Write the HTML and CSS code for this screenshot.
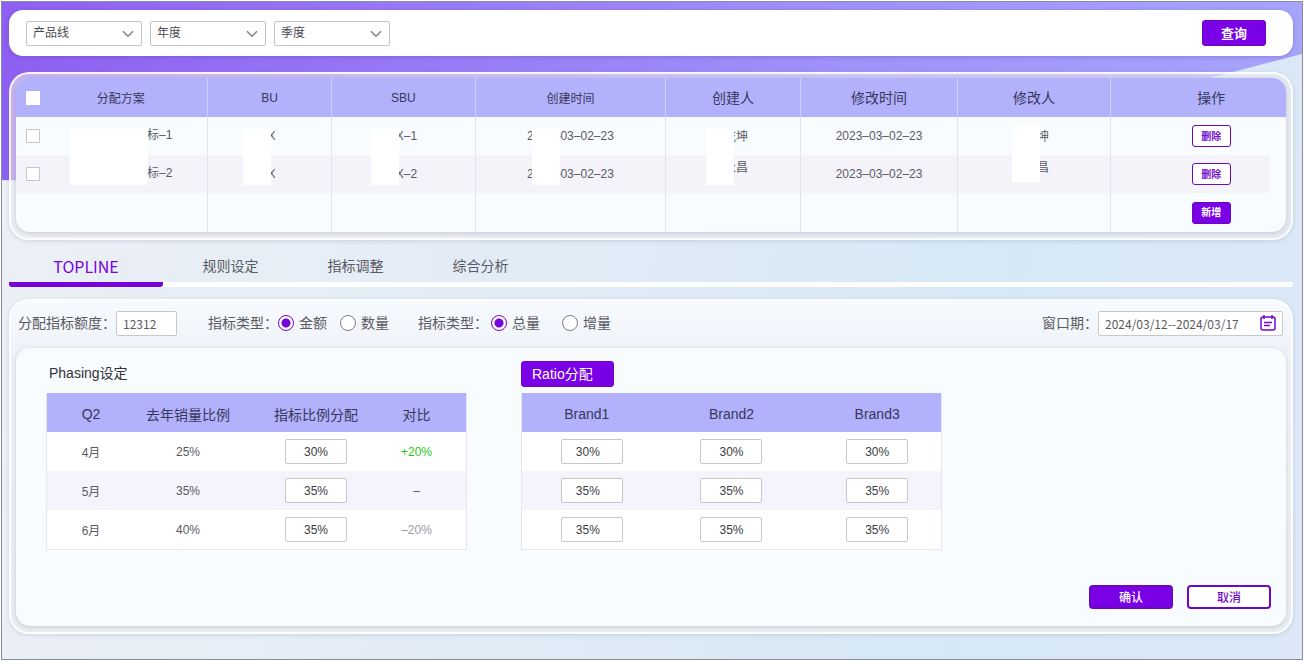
FILE: index.html
```html
<!DOCTYPE html>
<html lang="zh-CN">
<head>
  <meta charset="UTF-8" />
  <meta name="viewport" content="width=device-width, initial-scale=1.0"/>
  <title>指标分配</title>
  <link rel="stylesheet" href="styles.css">
</head>
<body>

<div class="page">

  <form class="search-bar">
    <span class="select-box">
      <select aria-label="产品线"><option>产品线</option></select>
      <svg viewBox="0 0 12 8"><path d="M1 1.2l5 5 5-5"/></svg>
    </span>
    <span class="select-box">
      <select aria-label="年度"><option>年度</option></select>
      <svg viewBox="0 0 12 8"><path d="M1 1.2l5 5 5-5"/></svg>
    </span>
    <span class="select-box">
      <select aria-label="季度"><option>季度</option></select>
      <svg viewBox="0 0 12 8"><path d="M1 1.2l5 5 5-5"/></svg>
    </span>
    <button type="button" class="btn btn-search">查询</button>
  </form>

  <div class="panel">
    <div class="panel-inner">
      <table class="plan-table">
        <colgroup>
          <col class="c-check"><col class="c-name"><col class="c-bu"><col class="c-sbu"><col class="c-time">
          <col class="c-creator"><col class="c-mtime"><col class="c-modifier"><col class="c-action">
        </colgroup>
        <thead>
          <tr>
            <th class="check"><input type="checkbox" aria-label="全选"></th>
            <th class="name">分配方案</th>
            <th>BU</th>
            <th>SBU</th>
            <th>创建时间</th>
            <th class="big">创建人</th>
            <th class="big">修改时间</th>
            <th class="big">修改人</th>
            <th class="big action">操作</th>
          </tr>
        </thead>
        <tbody>
          <tr>
            <td class="check"><input type="checkbox" aria-label="选择第1行"></td>
            <td class="name">标–1<i class="mask mask-name"></i></td>
            <td class="bu">X<i class="mask mask-bu"></i></td>
            <td class="sbu">X–1<i class="mask mask-sbu"></i></td>
            <td>2023–03–02–23<i class="mask mask-time"></i></td>
            <td class="creator">乾坤<i class="mask mask-creator"></i></td>
            <td>2023–03–02–23</td>
            <td class="modifier">坤<i class="mask mask-modifier"></i></td>
            <td class="action"><button type="button" class="btn btn-small btn-line">删除</button></td>
          </tr>
          <tr class="stripe">
            <td class="check"><input type="checkbox" aria-label="选择第2行"></td>
            <td class="name">标–2</td>
            <td class="bu">X</td>
            <td class="sbu">X–2</td>
            <td>2023–03–02–23</td>
            <td class="creator raised">永昌</td>
            <td>2023–03–02–23</td>
            <td class="modifier raised">昌</td>
            <td class="action"><button type="button" class="btn btn-small btn-line">删除</button></td>
          </tr>
          <tr>
            <td class="check"></td>
            <td class="name"></td>
            <td></td>
            <td></td>
            <td></td>
            <td></td>
            <td></td>
            <td></td>
            <td class="action"><button type="button" class="btn btn-small">新增</button></td>
          </tr>
        </tbody>
      </table>
    </div>
  </div>

  <nav class="tabs">
    <a href="#" class="tab active">TOPLINE</a>
    <a href="#" class="tab">规则设定</a>
    <a href="#" class="tab">指标调整</a>
    <a href="#" class="tab">综合分析</a>
  </nav>

  <form class="panel panel-light">
    <div class="filters">
      <label for="quota">分配指标额度：</label>
      <input type="text" id="quota" class="box quota" value="12312">

      <div class="radio-group amount">
        <span>指标类型：</span>
        <label><input type="radio" name="unit" checked>金额</label>
        <label><input type="radio" name="unit">数量</label>
      </div>

      <div class="radio-group total">
        <span>指标类型：</span>
        <label><input type="radio" name="scope" checked>总量</label>
        <label><input type="radio" name="scope">增量</label>
      </div>

      <label for="period" class="period-label">窗口期：</label>
      <span class="period">
        <input type="text" id="period" class="box" value="2024/03/12--2024/03/17">
        <svg viewBox="0 0 16 16">
          <rect x="1" y="2" width="14" height="13" rx="2"/>
          <path d="M4 0v4M12 0v4M4 7.500h8M4 10.500h6"/>
        </svg>
      </span>
    </div>

    <div class="panel-inner detail">
      <div class="blocks">
        <section>
          <h2 class="block-title">Phasing设定</h2>
          <table class="data-table phasing">
            <colgroup><col class="p1"><col class="p2"><col class="p3"><col class="p4"></colgroup>
            <thead>
              <tr><th>Q2</th><th>去年销量比例</th><th>指标比例分配</th><th>对比</th></tr>
            </thead>
            <tbody>
              <tr>
                <td>4月</td><td>25%</td>
                <td><input type="text" class="box" value="30%" aria-label="4月指标比例"></td>
                <td class="up">+20%</td>
              </tr>
              <tr class="stripe">
                <td>5月</td><td>35%</td>
                <td><input type="text" class="box" value="35%" aria-label="5月指标比例"></td>
                <td>–</td>
              </tr>
              <tr>
                <td>6月</td><td>40%</td>
                <td><input type="text" class="box" value="35%" aria-label="6月指标比例"></td>
                <td class="down">–20%</td>
              </tr>
            </tbody>
          </table>
        </section>

        <section>
          <button type="button" class="btn btn-ratio">Ratio分配</button>
          <table class="data-table ratio">
            <thead>
              <tr><th>Brand1</th><th>Brand2</th><th>Brand3</th></tr>
            </thead>
            <tbody>
              <tr>
                <td><input type="text" class="box" value="30%" aria-label="4月 Brand1"></td>
                <td><input type="text" class="box" value="30%" aria-label="4月 Brand2"></td>
                <td><input type="text" class="box" value="30%" aria-label="4月 Brand3"></td>
              </tr>
              <tr class="stripe">
                <td><input type="text" class="box" value="35%" aria-label="5月 Brand1"></td>
                <td><input type="text" class="box" value="35%" aria-label="5月 Brand2"></td>
                <td><input type="text" class="box" value="35%" aria-label="5月 Brand3"></td>
              </tr>
              <tr>
                <td><input type="text" class="box" value="35%" aria-label="6月 Brand1"></td>
                <td><input type="text" class="box" value="35%" aria-label="6月 Brand2"></td>
                <td><input type="text" class="box" value="35%" aria-label="6月 Brand3"></td>
              </tr>
            </tbody>
          </table>
        </section>
      </div>

      <div class="actions">
        <button type="button" class="btn btn-wide">确认</button>
        <button type="button" class="btn btn-wide btn-line">取消</button>
      </div>
    </div>
  </form>

</div>

</body>
</html>
```

FILE: styles.css
```css
* {
  box-sizing: border-box;
}
body {
  margin: 0;
  padding: 1px;
  background: #fff;
  color: #5a5a62;
  font-family: "Liberation Sans", "Noto Sans CJK SC", sans-serif;
  font-size: 12px;
}
button, input, select {
  font-family: inherit;
  margin: 0;
}
.page {
  position: relative;
  z-index: 0;
  min-height: calc(100vh - 2px);
  padding: 8px 9px 24px 7px;
  border: 1px solid #8c8c94;
  background: linear-gradient(100deg, #edf0f6 0%, #e0ebf6 45%, #d6e8f6 75%, #dce8f7 100%);
}
/* purple backdrop with the slanted edge */
.page::before {
  content: "";
  position: absolute;
  z-index: -1;
  top: 0;
  left: 0;
  right: 0;
  height: 179px;
  background: linear-gradient(90deg, #8e60f2 0%, #9778f6 30%, #9f92f9 65%, #a7a4fc 100%);
  clip-path: polygon(0 0, 100% 0, 100% 52px, 70% 154px, 3% 100%, 0 178px);
}

/* search bar */
.search-bar {
  display: flex;
  align-items: center;
  gap: 8px;
  height: 46px;
  padding: 0 27px 0 17px;
  background: #fff;
  border-radius: 14px;
  box-shadow: 0 1px 4px rgba(70, 50, 140, 0.3);
}
.select-box {
  position: relative;
  width: 116px;
}
.select-box select {
  display: block;
  width: 100%;
  height: 25px;
  padding: 0 6px;
  border: 1px solid #c4c4c4;
  border-radius: 2px;
  background: #fff;
  color: #4c4c54;
  font-size: 12px;
  appearance: none;
}
.select-box svg {
  position: absolute;
  top: 9px;
  right: 8px;
  width: 12px;
  height: 8px;
  fill: none;
  stroke: #808080;
  stroke-width: 1.4;
  pointer-events: none;
}

/* buttons */
.btn {
  padding: 0 0 2px;
  border: 1px solid #6a08c4;
  border-radius: 3px;
  background: #7a00e6;
  color: #fff;
  font-weight: 500;
  cursor: pointer;
}
.btn-line {
  background: #fff;
  color: #7410cc;
}
.btn-search {
  width: 64px;
  height: 26px;
  margin-left: auto;
  font-size: 13px;
  font-weight: bold;
}
.btn-small {
  display: block;
  width: 39px;
  height: 22px;
  margin: 0 auto;
  font-size: 10px;
  font-weight: bold;
}
.btn-wide {
  width: 84px;
  height: 24px;
  border-width: 2px;
  border-radius: 4px;
  font-size: 12px;
}
.btn-ratio {
  display: block;
  width: 93px;
  height: 26px;
  padding: 0 10px 3px;
  font-size: 14px;
  font-weight: normal;
  text-align: left;
}

/* frosted panels */
.panel {
  margin-top: 16px;
  padding: 4px 5px 6px;
  border: 2px solid rgba(255, 255, 255, 0.85);
  border-radius: 20px;
  background: rgba(236, 234, 240, 0.6);
  box-shadow: 0 1px 4px rgba(90, 100, 130, 0.2);
}
.panel-light {
  margin-top: 12px;
  padding-top: 0;
  background: linear-gradient(#f7fafe, #eff2f8 50px, #e9edf1);
}
.panel-inner {
  overflow: hidden;
  border-radius: 14px;
  background: #f8fcff;
  box-shadow: 0 1px 4px rgba(90, 100, 130, 0.25);
}

/* plan table */
.plan-table {
  width: 100%;
  table-layout: fixed;
  border-spacing: 0;
}
.c-check { width: 33px; }
.c-name { width: 12.5%; }
.c-bu { width: 9.8%; }
.c-sbu { width: 11.3%; }
.c-time { width: 15%; }
.c-creator { width: 10.6%; }
.c-mtime { width: 12.4%; }
.c-modifier { width: 12%; }
.plan-table th,
.plan-table td {
  height: 38px;
  padding: 0;
  border-right: 1px solid #e3e3ec;
  text-align: center;
}
.plan-table th {
  height: 39px;
  border-right-color: #d0d0fc;
  background: #b2b2fc;
  color: #37375a;
  font-weight: normal;
}
.plan-table td {
  position: relative;
}
.plan-table tbody tr:last-child td {
  height: 39px;
}
.plan-table .stripe td {
  background: #f5f3fa;
}
.plan-table .stripe .action {
  background: linear-gradient(#f5f3fa, #f5f3fa) no-repeat left / calc(100% - 16px) 100%;
}
.plan-table .big {
  padding-bottom: 2px;
  font-size: 14px;
}
.plan-table .check,
.plan-table .action {
  border-right: 0;
}
.plan-table .action {
  padding-left: 26px;
}
.plan-table th.name {
  padding-right: 14px;
}
.plan-table td.name {
  padding: 0 0 6px 98px;
  text-align: left;
}
.plan-table td.bu {
  padding-left: 4px;
}
.plan-table td.sbu {
  padding-left: 6px;
}
.plan-table td.creator {
  padding-left: 6px;
  padding-bottom: 2px;
}
.plan-table td.modifier {
  padding-left: 18px;
  padding-bottom: 2px;
}
.plan-table td.raised {
  padding-bottom: 16px;
}
.plan-table input {
  display: block;
  width: 14px;
  height: 14px;
  margin-left: 10px;
  border: 1px solid #c8c8cc;
  background: #fff;
  appearance: none;
}
.plan-table th input {
  border-color: #fff;
}
/* white patches hiding part of the values in both rows */
.mask {
  position: absolute;
  z-index: 1;
  top: 12px;
  width: 28px;
  height: 56px;
  background: #fff;
}
.mask-name { left: 21px; width: 78px; }
.mask-bu { left: 35px; }
.mask-sbu { left: 39px; }
.mask-time { left: 56px; }
.mask-creator { left: 40px; }
.mask-modifier { top: 9px; left: 54px; }

/* tabs */
.tabs {
  display: flex;
  height: 47px;
  background: linear-gradient(#fff, #fff) no-repeat bottom / 100% 5px;
  border-radius: 3px;
}
.tab {
  width: 125px;
  padding-top: 16px;
  color: #5a5a62;
  font-size: 14px;
  line-height: 21px;
  text-align: center;
  text-decoration: none;
}
.tab.active {
  width: 154px;
  margin-right: 5px;
  border-bottom: 5px solid #7404d8;
  border-radius: 3px;
  color: #7404d8;
  font-family: "Noto Sans CJK SC", sans-serif;
  font-size: 16px;
}

/* filters row */
.filters {
  display: flex;
  align-items: center;
  height: 47px;
  padding: 0 3px 2px 2px;
  font-size: 14px;
  line-height: 20px;
}
.filters label,
.filters span {
  padding-bottom: 1px;
}
.box {
  height: 25px;
  padding: 0 6px;
  border: 1px solid #c8c8cc;
  border-radius: 2px;
  background: #fff;
  color: #3c3c44;
  font-size: 12px;
}
.filters .box {
  color: #5a5a62;
  font-family: "Noto Sans CJK SC", sans-serif;
}
.quota {
  width: 61px;
}
.radio-group {
  display: flex;
  align-items: center;
}
.radio-group label {
  display: flex;
  align-items: center;
  gap: 5px;
}
.amount {
  margin-left: 31px;
}
.amount label + label {
  margin-left: 13px;
}
.total {
  margin-left: 29px;
}
.total span {
  margin-right: 3px;
}
.total label + label {
  margin-left: 22px;
}
.radio-group input {
  width: 16px;
  height: 16px;
  border: 1px solid #7c7c84;
  border-radius: 50%;
  background: #fff;
  appearance: none;
}
.radio-group input:checked {
  border-color: #7404d8;
  background: radial-gradient(circle, #7404d8 4px, #fff 5px);
}
.period-label {
  margin-left: auto;
}
.filters .period {
  position: relative;
  width: 185px;
  padding: 0;
}
.period .box {
  display: block;
  width: 100%;
}
.period svg {
  position: absolute;
  top: 4px;
  right: 7px;
  width: 16px;
  height: 16px;
  fill: none;
  stroke: #7404d8;
  stroke-width: 1.5;
}

/* detail tables */
.detail {
  padding: 13px 15px 17px 30px;
}
.blocks {
  display: flex;
  gap: 55px;
}
.block-title {
  margin: 0;
  padding: 0 0 2px 3px;
  color: #33333c;
  font-size: 14px;
  font-weight: normal;
  line-height: 24px;
}
.data-table {
  width: 421px;
  margin-top: 6px;
  table-layout: fixed;
  border-spacing: 0;
  border: 1px solid #e6e6ee;
  border-top: 0;
  background: #fff;
}
.blocks section {
  width: 420px;
}
.data-table th {
  height: 39px;
  padding: 2px 0 0;
  background: #b2b2fc;
  color: #37375a;
  font-size: 14px;
  font-weight: normal;
}
.data-table td {
  height: 39px;
  padding: 0;
  text-align: center;
}
.data-table .stripe td {
  background: #f5f3fb;
}
.data-table .box {
  width: 62px;
  text-align: center;
}
.p1 { width: 88px; }
.p2 { width: 106px; }
.p3 { width: 150px; }
.phasing th:last-child,
.phasing td:last-child {
  padding-right: 24px;
}
.phasing .up {
  color: #2fc41c;
}
.phasing .down {
  color: #9a9aa0;
}
.ratio th:first-child {
  padding-right: 10px;
}
.ratio th:last-child,
.ratio td:last-child {
  padding-left: 12px;
}
.ratio td:first-child .box {
  padding-right: 14px;
}
.actions {
  display: flex;
  justify-content: flex-end;
  gap: 14px;
  margin-top: 35px;
}
```
